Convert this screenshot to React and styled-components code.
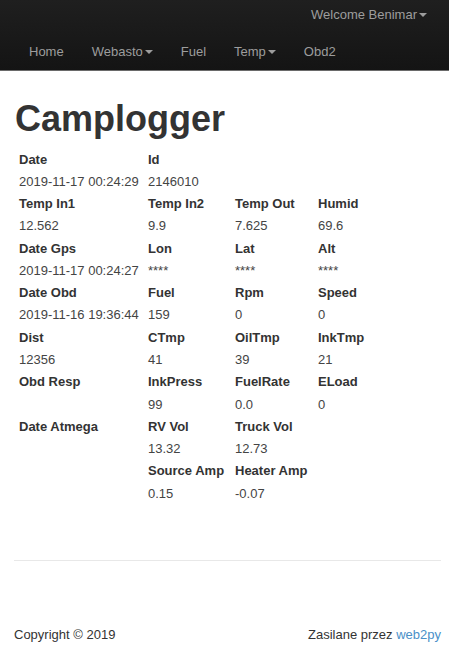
import React from 'react'
import styled, { createGlobalStyle } from 'styled-components'

const rows = [
  { bold: true, cells: ['Date', 'Id', '', ''] },
  { cells: ['2019-11-17 00:24:29', '2146010', '', ''] },
  { bold: true, cells: ['Temp In1', 'Temp In2', 'Temp Out', 'Humid'] },
  { cells: ['12.562', '9.9', '7.625', '69.6'] },
  { bold: true, cells: ['Date Gps', 'Lon', 'Lat', 'Alt'] },
  { cells: ['2019-11-17 00:24:27', '****', '****', '****'] },
  { bold: true, cells: ['Date Obd', 'Fuel', 'Rpm', 'Speed'] },
  { cells: ['2019-11-16 19:36:44', '159', '0', '0'] },
  { bold: true, cells: ['Dist', 'CTmp', 'OilTmp', 'InkTmp'] },
  { cells: ['12356', '41', '39', '21'] },
  { bold: true, cells: ['Obd Resp', 'InkPress', 'FuelRate', 'ELoad'] },
  { cells: ['', '99', '0.0', '0'] },
  { bold: true, cells: ['Date Atmega', 'RV Vol', 'Truck Vol', ''] },
  { cells: ['', '13.32', '12.73', ''] },
  { bold: true, cells: ['', 'Source Amp', 'Heater Amp', ''] },
  { cells: ['', '0.15', '-0.07', ''] },
]

export default function App() {
  return (
    <Page>
      <GlobalStyle />
      <Navbar>
        <UserBar>
          <NavLink>Welcome Benimar<Caret /></NavLink>
        </UserBar>
        <Menu>
          <NavLink>Home</NavLink>
          <NavLink>Webasto<Caret /></NavLink>
          <NavLink>Fuel</NavLink>
          <NavLink>Temp<Caret /></NavLink>
          <NavLink>Obd2</NavLink>
        </Menu>
      </Navbar>
      <Main>
        <Title>Camplogger</Title>
        <Table>
          <colgroup>
            <col style={{ width: 129 }} />
            <col style={{ width: 87 }} />
            <col style={{ width: 83 }} />
            <col />
          </colgroup>
          <tbody>
            {rows.map((r, i) => (
              <tr key={i}>
                {r.cells.map((c, j) => (
                  <Cell key={j} $bold={r.bold}>{c}</Cell>
                ))}
              </tr>
            ))}
          </tbody>
        </Table>
      </Main>
      <Footer>
        <Rule />
        <FooterRow>
          <span>Copyright © 2019</span>
          <span>Zasilane przez <Link>web2py</Link></span>
        </FooterRow>
      </Footer>
    </Page>
  )
}

const GlobalStyle = createGlobalStyle`
  html, body {
    margin: 0;
    padding: 0;
    background: #fff;
  }
  body {
    font-family: "Liberation Sans", Arial, sans-serif;
    font-size: 13px;
    color: #333;
  }
`

const Page = styled.div`
  min-height: 650px;
  display: flex;
  flex-direction: column;
`

const Navbar = styled.div`
  background: linear-gradient(to bottom, #1f1f1f 0%, #141414 100%);
  border-bottom: 1px solid #6a6a6a;
  height: 70px;
  display: flex;
  flex-direction: column;
`

const UserBar = styled.div`
  display: flex;
  justify-content: flex-end;
  padding: 0 22px 0 0;
  height: 35px;
`

const Menu = styled.div`
  display: flex;
  padding-left: 15px;
`

const NavLink = styled.span`
  color: #9d9d9d;
  font-size: 13px;
  line-height: 18px;
  padding: 8px 14px;
  display: inline-flex;
  align-items: center;
  ${UserBar} & {
    padding: 6px 0 0;
    align-self: flex-start;
  }
`

const Caret = styled.span`
  display: inline-block;
  width: 0;
  height: 0;
  margin-left: 2px;
  border-top: 4px solid #9d9d9d;
  border-left: 4px solid transparent;
  border-right: 4px solid transparent;
`

const Main = styled.div`
  padding: 0 15px;
`

const Title = styled.h1`
  font-size: 36px;
  font-weight: bold;
  line-height: 1.1;
  margin: 28px 0 10px;
  color: #333;
`

const Table = styled.table`
  border-collapse: collapse;
  table-layout: fixed;
  width: 419px;
`

const Cell = styled.td`
  padding: 0 4px;
  line-height: 22.27px;
  height: 22.27px;
  white-space: nowrap;
  font-weight: ${p => (p.$bold ? 'bold' : 'normal')};
  color: ${p => (p.$bold ? '#333' : '#444')};
  vertical-align: middle;
`

const Footer = styled.div`
  padding: 0 8px 0 14px;
  margin-top: auto;
`

const Rule = styled.hr`
  border: 0;
  border-top: 1px solid #e8e8e8;
  margin: 0 0 65px;
`

const FooterRow = styled.div`
  display: flex;
  justify-content: space-between;
  line-height: 18px;
  padding-bottom: 6px;
`

const Link = styled.span`
  color: #4a90c8;
`
